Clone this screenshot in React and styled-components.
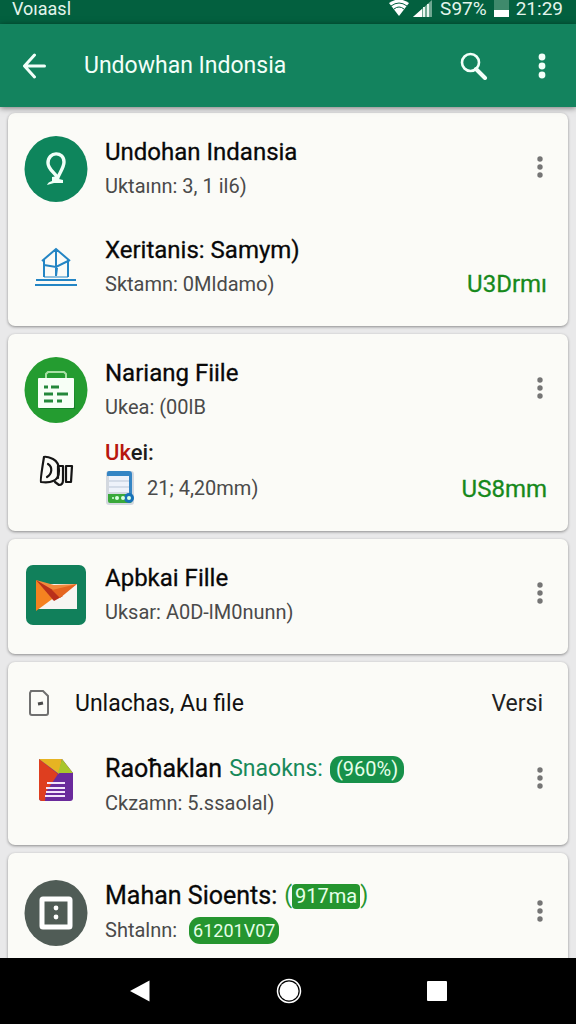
import React from "react";
import styled, { createGlobalStyle } from "styled-components";

const GlobalStyle = createGlobalStyle`
  * {
    box-sizing: border-box;
  }

  body {
    margin: 0;
    font-family: Roboto, "Liberation Sans", sans-serif;
    background-color: #e9e9ea;
  }

  h1,
  h2,
  p {
    margin: 0;
    font-weight: 400;
  }

  button {
    display: flex;
    align-items: center;
    justify-content: center;
    padding: 0;
    border: 0;
    background: none;
    color: inherit;
    cursor: pointer;
  }

  svg {
    display: block;
  }
`;

/* Icons */
const WifiIcon = () => (
  <svg width="22" height="17" viewBox="0 0 22 17">
    <path d="M1 3Q11-4 21 3L11 16z" fill="#fff" />
    <path d="M3 6q8-6 16 0M6 9q5-4 10 0" fill="none" stroke="#03603f" />
  </svg>
);

const SignalIcon = () => (
  <svg width="20" height="18" viewBox="0 0 20 18">
    <path d="M0 17L19 0v17z" fill="#6fa791" />
    <path d="M0 17l9-8v8z" fill="#fff" />
    <path d="M11 17V7M15 17V4" stroke="#e9f5ef" strokeWidth="2" />
  </svg>
);

const BatteryIcon = () => (
  <svg width="15" height="18" viewBox="0 0 15 18">
    <path d="M0 0h15v17H0z" fill="#3f8a6c" />
    <path d="M0 10h15v7H0z" fill="#fff" />
  </svg>
);

const BackIcon = () => (
  <svg width="24" height="26" viewBox="0 0 24 26">
    <path
      d="M12.500 2L2.500 13l10 11M3 13h19.500"
      fill="none"
      stroke="#f2fff9"
      strokeWidth="3"
      strokeLinecap="round"
      strokeLinejoin="round"
    />
  </svg>
);

const SearchIcon = () => (
  <svg width="28" height="28" viewBox="0 0 28 28" fill="none" stroke="#f2fff9">
    <circle cx="10.500" cy="10.500" r="8.500" strokeWidth="2.600" />
    <path d="M16 17l9 9" strokeWidth="4" strokeLinecap="round" />
  </svg>
);

const MoreIcon = ({ large }) => (
  <svg
    width={large ? 8 : 6}
    height={large ? 26 : 22}
    viewBox={large ? "0 0 8 26" : "0 0 6 22"}
    fill="currentColor"
  >
    {large ? (
      <>
        <circle cx="4" cy="4" r="3.400" />
        <circle cx="4" cy="13" r="3.400" />
        <circle cx="4" cy="22" r="3.400" />
      </>
    ) : (
      <>
        <circle cx="3" cy="3" r="2.700" />
        <circle cx="3" cy="11" r="2.700" />
        <circle cx="3" cy="19" r="2.700" />
      </>
    )}
  </svg>
);

const RibbonIcon = () => (
  <svg width="64" height="66" viewBox="0 0 64 66">
    <ellipse cx="32" cy="33" rx="31.500" ry="33" fill="#0e855c" />
    <path
      d="M33 41c-3-5-9-8-9-14 0-12 16-12 16-1 0 6-5 11-7 18"
      fill="none"
      stroke="#f0fff8"
      strokeWidth="3.400"
    />
    <path d="M28 41l6-1 1 3 4 1v3h-9l-7 2q1-3 5-4z" fill="#f0fff8" />
  </svg>
);

const HouseIcon = () => (
  <svg
    width="44"
    height="40"
    viewBox="0 0 44 40"
    fill="none"
    stroke="#2485c4"
    strokeWidth="2"
  >
    <path d="M8 14L22 2l14 12M10 12v18M34 12v18M22 2v27M10 18l12 2 12-6M22 29l1-8" />
    <path d="M10 30h24" strokeWidth="1" />
    <path d="M2 33h40M1 38h42" />
  </svg>
);

const BriefcaseIcon = () => (
  <svg width="64" height="66" viewBox="0 0 64 66">
    <ellipse cx="32" cy="33" rx="31.500" ry="33" fill="#249c30" />
    <path d="M22 21v-4l2-2h16l2 2v4" fill="none" stroke="#a8e0a4" strokeWidth="2" />
    <path d="M15 22h35l1 30H16z" fill="#16802a" />
    <rect x="14" y="21" width="36" height="30" rx="1" fill="#f7fff6" />
    <path
      d="M20 30h4M27 30h8M20 37h9M33 37h11M20 44h9M33 44h5"
      stroke="#24883a"
      strokeWidth="3"
    />
  </svg>
);

const BadgeIcon = () => (
  <svg
    width="36"
    height="32"
    viewBox="0 0 36 32"
    fill="none"
    stroke="#151515"
    strokeWidth="2.200"
    strokeLinejoin="round"
    strokeLinecap="round"
  >
    <path d="M6 2q2-1 9 2c8 4 8 19 0 22q-4 2-12 1Q2 26 6 2z" />
    <path d="M10 9c5 3 4 10-1 13" />
    <path d="M20 11h5v14q0 5-4 5l-4-3M20 11v12" />
    <path d="M28 11h6l-1 16h-5z" />
  </svg>
);

const ServerIcon = () => (
  <svg width="30" height="36" viewBox="0 0 30 36">
    <rect x="1" y="1" width="28" height="34" rx="3" fill="#d3d8df" />
    <path d="M2 3q0-2 2-2h20q3 0 3 3v20h-3V6H2z" fill="#3485c4" />
    <path d="M4 6h20v16H4z" fill="#eef2fa" />
    <path d="M4 11h20M4 17h20" stroke="#b9c5d6" />
    <path d="M3 24h24v7q0 2-2 2H5q-2 0-2-2z" fill="#39a83a" />
    <circle cx="24" cy="28" r="5" fill="#1772b8" />
    <g fill="#d9ffe0">
      <circle cx="8" cy="28" r="1" />
      <circle cx="12" cy="28" r="2" />
      <circle cx="18" cy="28" r="2" />
      <circle cx="24" cy="28" r="2" />
    </g>
  </svg>
);

const MailIcon = () => (
  <svg width="64" height="60" viewBox="0 0 64 60">
    <rect x="2" width="60" height="60" rx="7" fill="#11805b" />
    <path d="M12 19h41v25H12z" fill="#f7f5f2" />
    <path d="M12 15l19 17-19 14z" fill="#f58220" />
    <path d="M12 15l18 5 23-1-24 16z" fill="#f08a3c" />
    <path d="M12 15l27 16-9 5z" fill="#b9301a" />
    <path d="M28 25l25-6-17 14z" fill="#e5651f" />
  </svg>
);

const FileIcon = () => (
  <svg width="22" height="28" viewBox="0 0 22 28" fill="none" stroke="#707070" strokeWidth="2">
    <path d="M3 2h12l5 5v17q0 2-2 2H4q-2 0-2-2V4z" />
    <path d="M10 15l5-1" strokeWidth="3" stroke="#484848" />
  </svg>
);

const DocIcon = () => (
  <svg width="36" height="44" viewBox="0 0 36 44">
    <path d="M1 1h23l11 14v25q0 3-3 3H4q-3 0-3-3z" fill="#6a2a9c" />
    <path d="M1 1l19 15L8 34l-1 9H4q-3 0-3-3z" fill="#de3e1f" />
    <path d="M1 1h23l-3 15z" fill="#e6b422" />
    <path d="M24 1l11 14H20z" fill="#a9c62c" />
    <path d="M9 25h18M8 30h19M8 34h19M7 38h20" stroke="#f2e4fb" strokeWidth="2" />
  </svg>
);

const FrameIcon = () => (
  <svg width="64" height="66" viewBox="0 0 64 66">
    <ellipse cx="32" cy="33" rx="31.500" ry="33" fill="#505c56" />
    <rect x="18" y="19" width="28" height="28" rx="1" fill="none" stroke="#fff" strokeWidth="5" />
    <circle cx="32" cy="28" r="2.400" fill="#fff" />
    <circle cx="32" cy="37" r="2.400" fill="#fff" />
  </svg>
);

const MoreButton = () => (
  <RowButton aria-label="More options">
    <MoreIcon />
  </RowButton>
);

const App = () => {
  return (
    <Screen>
      <GlobalStyle />
      <StatusBar>
        <span>Voıaasl</span>
        <StatusGroup>
          <WifiIcon />
          <SignalIcon />
          <StatusText>S97%</StatusText>
          <BatteryIcon />
          <StatusText>21:29</StatusText>
        </StatusGroup>
      </StatusBar>

      <AppBar>
        <BarButton aria-label="Back">
          <BackIcon />
        </BarButton>
        <BarTitle>Undowhan Indonsia</BarTitle>
        <BarButton aria-label="Search">
          <SearchIcon />
        </BarButton>
        <BarButton aria-label="Menu">
          <MoreIcon large />
        </BarButton>
      </AppBar>

      <List>
        <Card $gap="30px">
          <Row>
            <RibbonIcon />
            <div>
              <Title>Undohan Indansia</Title>
              <Detail>Uktaınn: 3, 1 il6)</Detail>
            </div>
            <MoreButton />
          </Row>
          <Row>
            <HouseIcon />
            <div>
              <Title>Xeritanis: Samym)</Title>
              <Detail>Sktamn: 0Mldamo)</Detail>
            </div>
            <Price>U3Drmı</Price>
          </Row>
        </Card>

        <Card $gap="12px">
          <Row>
            <BriefcaseIcon />
            <div>
              <Title>Nariang Fiile</Title>
              <Detail>Ukea: (00lB</Detail>
            </div>
            <MoreButton />
          </Row>
          <Row>
            <BadgeIcon />
            <div>
              <Label>
                <Warn>Uk</Warn>ei:
              </Label>
              <Detail>
                <ServerIcon />
                21; 4,20mm)
              </Detail>
            </div>
            <Price>US8mm</Price>
          </Row>
        </Card>

        <Card>
          <Row>
            <MailIcon />
            <div>
              <Title>Apbkai Fille</Title>
              <Detail>Uksar: A0D-lM0nunn)</Detail>
            </div>
            <MoreButton />
          </Row>
        </Card>

        <Card $gap="30px">
          <CardHeader>
            <FileIcon />
            <HeaderTitle>Unlachas, Au file</HeaderTitle>
            <span>Versi</span>
          </CardHeader>
          <Row $lift="12px">
            <DocIcon />
            <div>
              <Title $large>
                Raoħaklan <Accent>Snaokns:</Accent>
                <Pill>(960%)</Pill>
              </Title>
              <Detail>Ckzamn: 5.ssaolal)</Detail>
            </div>
            <MoreButton />
          </Row>
        </Card>

        <Card $roomy>
          <Row>
            <FrameIcon />
            <div>
              <Title $large>
                Mahan Sioents:
                <Bracket>
                  (<Tag>917ma</Tag>)
                </Bracket>
              </Title>
              <Detail>
                Shtalnn:
                <Pill $small>61201V07</Pill>
              </Detail>
            </div>
            <MoreButton />
          </Row>
        </Card>
      </List>

      <NavBar>
        <button aria-label="Back">
          <svg width="22" height="24" viewBox="0 0 22 24" fill="#fff">
            <path d="M20.500 1.500v21L1 12z" />
          </svg>
        </button>
        <button aria-label="Home">
          <svg width="26" height="26" viewBox="0 0 26 26">
            <circle cx="13" cy="13" r="11.500" fill="none" stroke="#fff" strokeWidth="1.500" />
            <circle cx="13" cy="13" r="9.500" fill="#fff" />
          </svg>
        </button>
        <button aria-label="Recent apps">
          <svg width="20" height="20" viewBox="0 0 20 20" fill="#fff">
            <rect width="20" height="20" rx="1" />
          </svg>
        </button>
      </NavBar>
    </Screen>
  );
};

const Screen = styled.div`
  display: flex;
  flex-direction: column;
  height: 100vh;
  overflow: hidden;
`;

const StatusBar = styled.div`
  flex: none;
  display: flex;
  align-items: flex-start;
  justify-content: space-between;
  height: 24px;
  padding: 0 9px 0 12px;
  font-size: 18px;
  line-height: 18px;
  color: #e3f5ec;
  background-color: #03603f;
`;

const StatusGroup = styled.div`
  display: flex;
  align-items: flex-start;
  gap: 3px;
`;

const StatusText = styled.span`
  padding: 0 4px;
  font-size: 19px;
`;

const AppBar = styled.header`
  flex: none;
  display: flex;
  align-items: center;
  height: 83px;
  color: #f2fff9;
  background-color: #13835e;
  box-shadow: 0 1px 6px rgba(0, 0, 0, 0.5);
  z-index: 1;
`;

const BarButton = styled.button`
  width: 68px;
  height: 56px;
`;

const BarTitle = styled.h1`
  flex: 1;
  padding-left: 16px;
  font-size: 23px;
`;

const List = styled.main`
  flex: 1;
  min-height: 0;
  display: flex;
  flex-direction: column;
  gap: 8px;
  padding: 6px 8px 0;
  overflow: hidden;
`;

const Card = styled.section`
  flex: none;
  display: flex;
  flex-direction: column;
  gap: ${(props) => props.$gap || "0"};
  padding: ${(props) => (props.$roomy ? "26px" : "22px")} 21px 25px 16px;
  border-radius: 7px;
  background-color: #fbfbf7;
  box-shadow: 0 1px 3px rgba(0, 0, 0, 0.4);
`;

const Row = styled.div`
  display: grid;
  grid-template-columns: 64px 1fr auto;
  column-gap: 17px;
  align-items: center;

  > svg,
  > button {
    justify-self: center;
    margin-bottom: ${(props) => props.$lift || "0"};
  }
`;

const Title = styled.h2`
  display: flex;
  align-items: center;
  gap: 7px;
  font-size: ${(props) => (props.$large ? "25px" : "24px")};
  line-height: 34px;
  color: #080808;
  white-space: nowrap;
  -webkit-text-stroke: 0.3px #080808;
`;

const Detail = styled.p`
  display: flex;
  align-items: center;
  gap: 12px;
  font-size: 20px;
  line-height: 34px;
  color: #4a4a4a;
`;

const Label = styled.p`
  font-size: 22px;
  font-weight: 500;
  line-height: 34px;
  color: #1c1c1c;
`;

const Warn = styled.span`
  color: #b7170f;
`;

const Accent = styled.span`
  font-size: 23px;
  color: #17895a;
  -webkit-text-stroke: 0;
`;

const Pill = styled.span`
  padding: 0 ${(props) => (props.$small ? "4px" : "6px")};
  border-radius: 11px;
  font-size: ${(props) => (props.$small ? "18px" : "20px")};
  line-height: 27px;
  color: #e6ffe9;
  background-color: ${(props) => (props.$small ? "#25952f" : "#17914a")};
  -webkit-text-stroke: 0;
`;

const Bracket = styled.span`
  display: flex;
  align-items: center;
  font-size: 23px;
  color: #25952f;
  -webkit-text-stroke: 0;
`;

const Tag = styled.span`
  padding: 0 3px;
  border-radius: 4px;
  font-size: 20px;
  line-height: 25px;
  color: #e6ffe9;
  background-color: #25952f;
`;

const Price = styled.strong`
  align-self: end;
  font-size: 24px;
  font-weight: 400;
  line-height: 34px;
  color: #16891b;
  -webkit-text-stroke: 0.3px #16891b;
`;

const RowButton = styled.button`
  width: 14px;
  height: 48px;
  padding-bottom: 4px;
  color: #757575;
`;

const CardHeader = styled.div`
  display: flex;
  align-items: center;
  height: 38px;
  padding: 0 4px;
  font-size: 23px;
  color: #222;
`;

const HeaderTitle = styled.h2`
  flex: 1;
  padding-left: 25px;
  font-size: 23px;
  color: #111;
`;

const NavBar = styled.nav`
  flex: none;
  display: flex;
  align-items: center;
  justify-content: center;
  gap: 125px;
  height: 66px;
  background-color: #000;
`;

export default App;
